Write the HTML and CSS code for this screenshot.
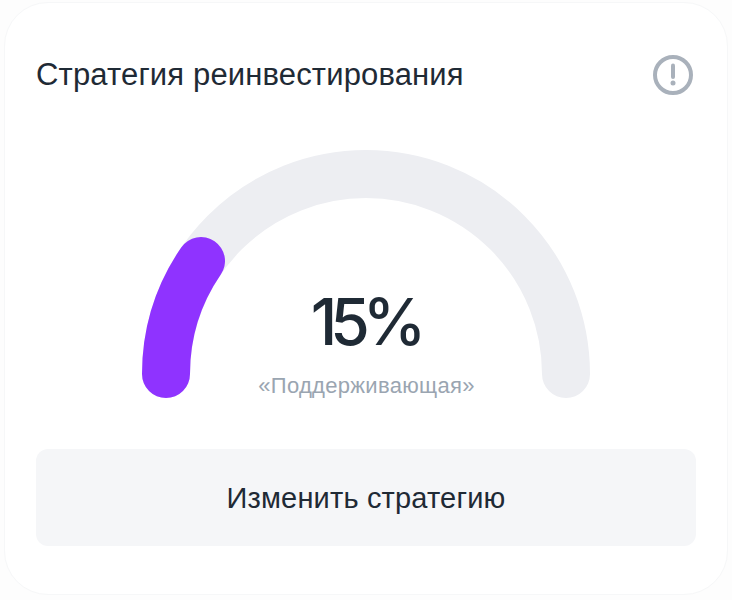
FILE: index.html
```html
<!DOCTYPE html>
<html lang="ru">
<head>
    <meta charset="UTF-8">
    <meta name="viewport" content="width=device-width, initial-scale=1.0">
    <title>Стратегия реинвестирования</title>
    <link rel="stylesheet" href="styles.css">
</head>
<body>
    <div class="card">
        <div class="card-header">
            <h2>Стратегия реинвестирования</h2>
            <svg class="info-icon" width="40" height="40" viewBox="0 0 40 40" fill="none">
                <circle cx="20" cy="20" r="18" stroke="#a9b1bb" stroke-width="4"/>
                <path d="M20 10.5V22" stroke="#a9b1bb" stroke-width="4" stroke-linecap="round"/>
                <circle cx="20" cy="28" r="2.5" fill="#a9b1bb"/>
            </svg>
        </div>
        <div class="gauge">
            <svg width="448" height="248" viewBox="0 0 448 248" fill="none">
                <path d="M24 224A200 200 0 0 1 424 224" stroke="#edeef2" stroke-width="48" stroke-linecap="round"/>
                <path d="M24 224A200 200 0 0 1 59 111" stroke="#8f33ff" stroke-width="48" stroke-linecap="round"/>
            </svg>
            <div class="gauge-text">
                <div class="gauge-value">15%</div>
                <div class="gauge-label">«Поддерживающая»</div>
            </div>
        </div>
        <button class="change-btn" type="button">Изменить стратегию</button>
    </div>
</body>
</html>
```

FILE: styles.css
```css
html, body {
    margin: 0;
    background-color: #fdfdfd;
}
body {
    font-family: "Liberation Sans", Arial, sans-serif;
    color: #1f2a35;
    padding: 2px 4px 5px;
}
.card {
    box-sizing: border-box;
    height: 593px;
    background-color: white;
    border: 1px solid #f6f7f8;
    border-radius: 44px;
    padding: 47px 31px 48px;
    display: flex;
    flex-direction: column;
}
.card-header {
    display: flex;
    justify-content: space-between;
    align-items: center;
    height: 50px;
}
.card-header h2 {
    margin: 0;
    font-size: 31px;
    font-weight: 400;
    letter-spacing: 0.15px;
}
.info-icon {
    margin-right: 3px;
}
.gauge {
    position: relative;
    align-self: center;
    width: 448px;
    height: 248px;
    margin-top: 50px;
}
.gauge svg {
    display: block;
}
.gauge-text {
    position: absolute;
    left: 0;
    right: 0;
    top: 136px;
    text-align: center;
}
.gauge-value {
    font-family: Inter, sans-serif;
    font-size: 64px;
    font-weight: 500;
    line-height: 72px;
    letter-spacing: -7px;
    padding-right: 2px;
}
.gauge-label {
    margin-top: 14px;
    padding-left: 1px;
    font-size: 22px;
    line-height: 28px;
    letter-spacing: 0.3px;
    color: #9aa5b1;
}
.change-btn {
    margin-top: 51px;
    height: 97px;
    padding: 2px 0 0;
    border: none;
    border-radius: 12px;
    background-color: #f5f6f8;
    color: #1f2a35;
    font-family: inherit;
    font-size: 29px;
    letter-spacing: 0.17px;
    cursor: pointer;
}
```
